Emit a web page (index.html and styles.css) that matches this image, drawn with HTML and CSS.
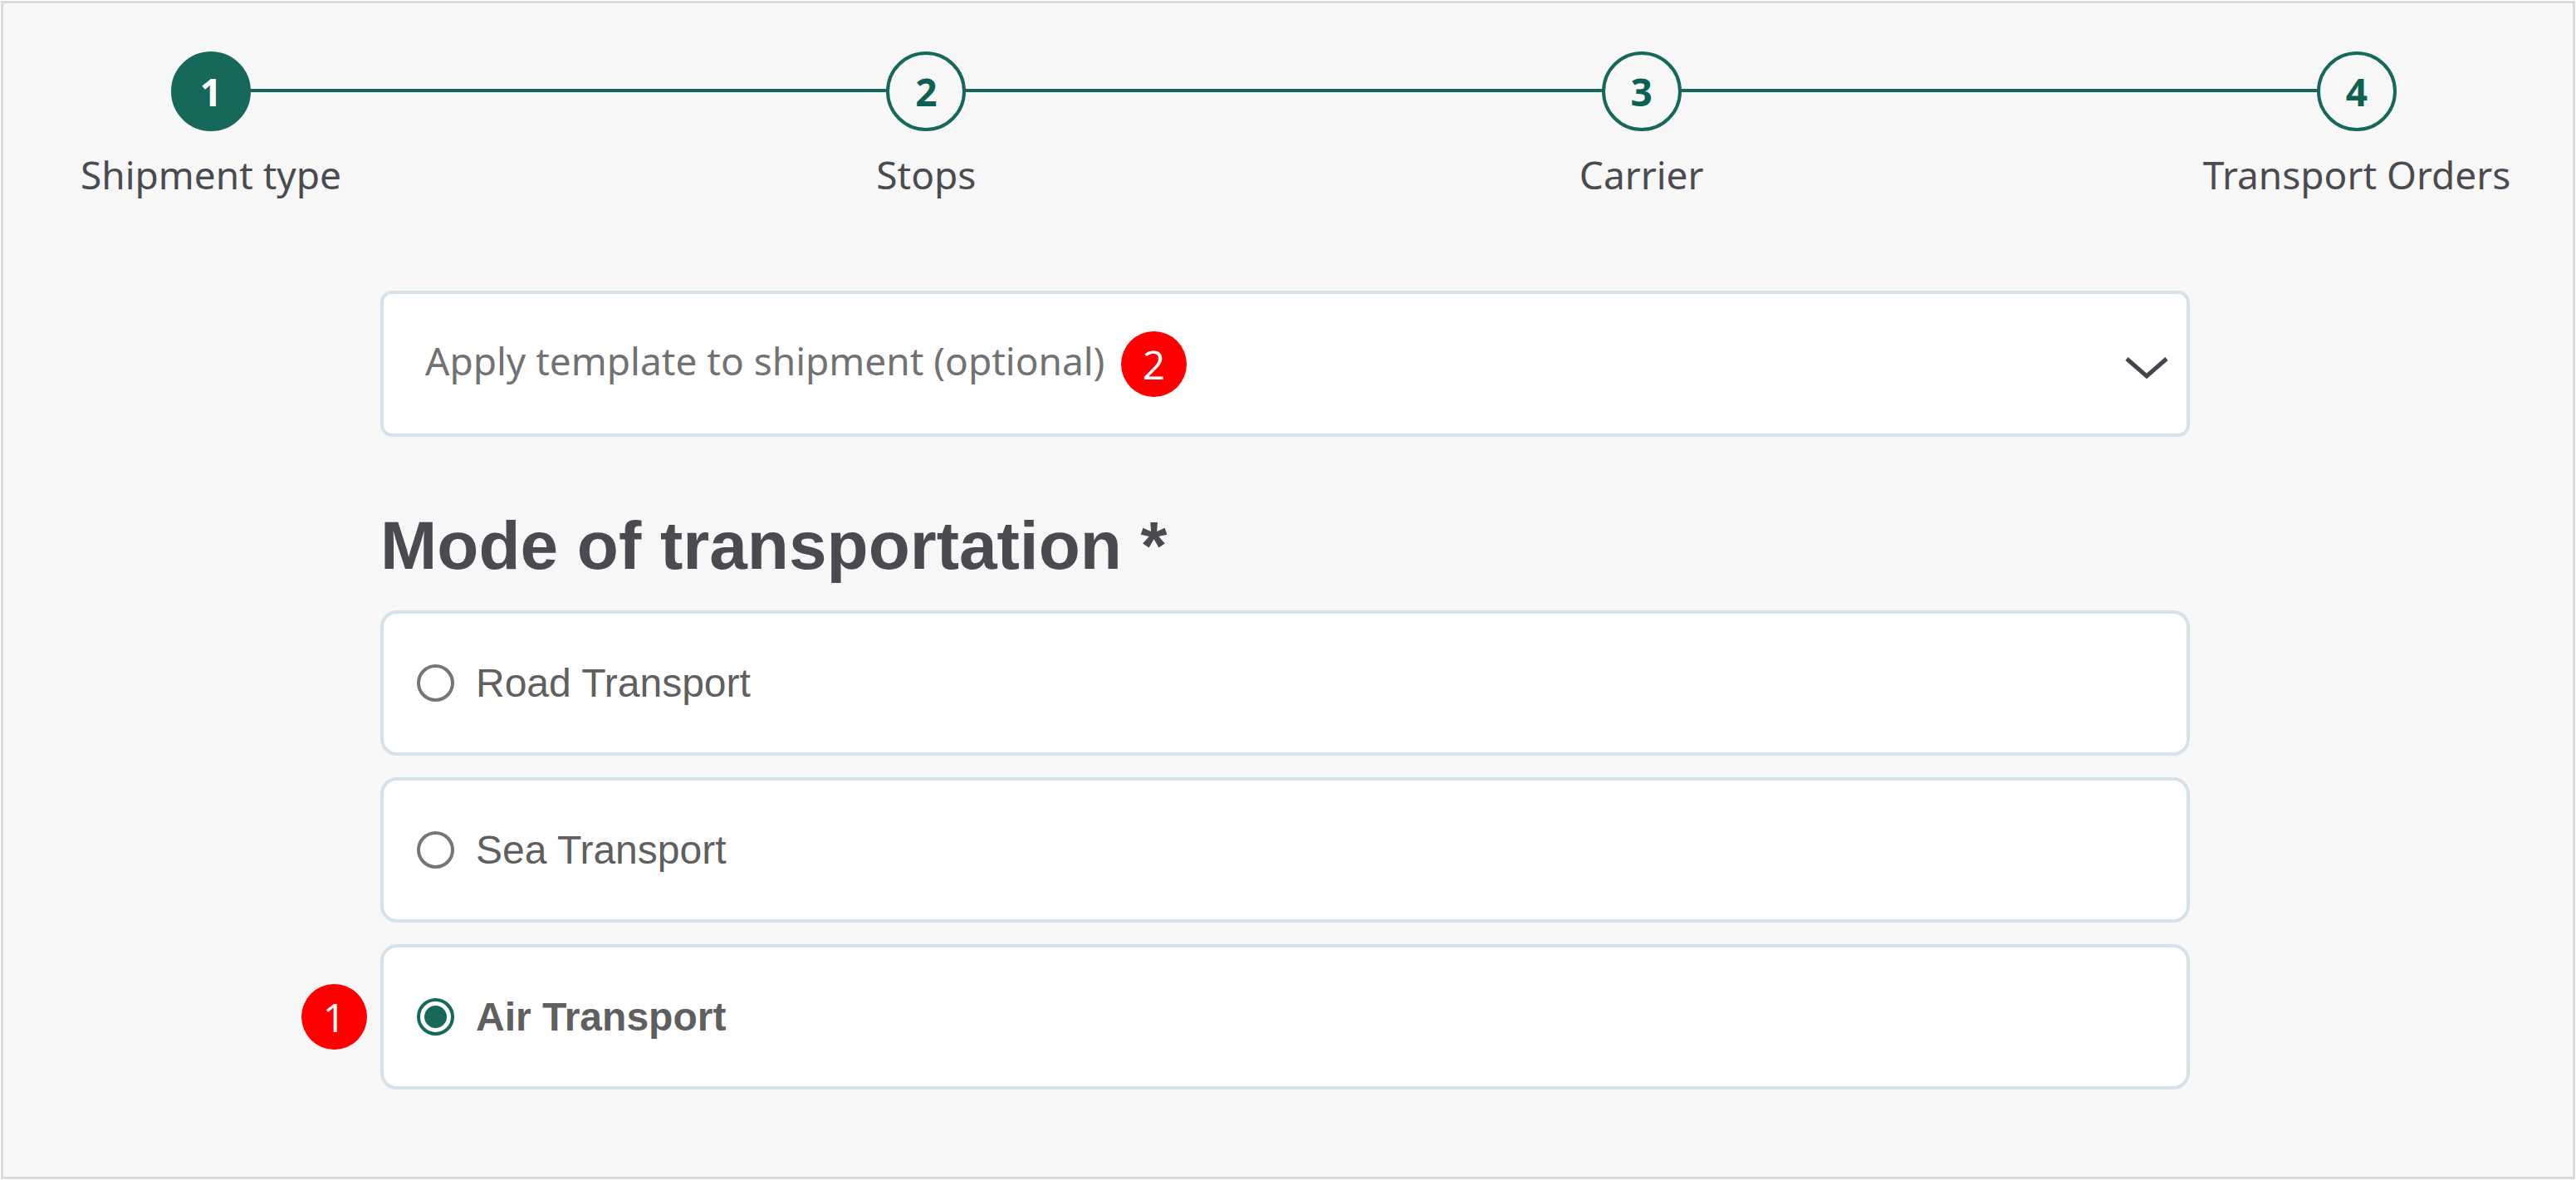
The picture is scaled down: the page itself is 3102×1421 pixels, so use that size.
FILE: index.html
```html
<!DOCTYPE html>
<html lang="en">
<head>
  <meta charset="UTF-8">
  <meta name="viewport" content="width=device-width, initial-scale=1.0">
  <title>Create shipment</title>
  <link rel="stylesheet" href="styles.css">
</head>
<body>
  <div class="page">
    <ol class="stepper">
      <li class="step active"><span class="circle">1</span><span class="step-label">Shipment type</span></li>
      <li class="step"><span class="circle">2</span><span class="step-label">Stops</span></li>
      <li class="step"><span class="circle">3</span><span class="step-label">Carrier</span></li>
      <li class="step"><span class="circle">4</span><span class="step-label">Transport Orders</span></li>
    </ol>

    <form class="form">
      <div class="template">
        <select class="template-select" aria-label="Apply template to shipment (optional)">
          <option>Apply template to shipment (optional)</option>
        </select>
        <svg class="chevron" viewBox="0 0 52 28" aria-hidden="true">
          <path d="M2 3 L26 24 L50 3" fill="none" stroke="#45464b" stroke-width="5"/>
        </svg>
        <span class="badge badge-template">2</span>
      </div>

      <fieldset class="modes">
        <legend class="title">Mode of transportation *</legend>
        <div class="options">
          <label class="option"><input type="radio" name="mode" value="road">Road Transport</label>
          <label class="option"><input type="radio" name="mode" value="sea">Sea Transport</label>
          <label class="option selected"><input type="radio" name="mode" value="air" checked>Air Transport<span class="badge badge-option">1</span></label>
        </div>
      </fieldset>
    </form>
  </div>
</body>
</html>
```

FILE: styles.css
```css
* {
  box-sizing: border-box;
}
body {
  margin: 1px;
  background: #fff;
  font-family: "Noto Sans", "Open Sans", sans-serif;
  font-size: 46px;
  line-height: 64px;
  color: #4a4b50;
}
.page {
  min-height: calc(100vh - 2px);
  padding-top: 58px;
  border: 3px solid #dadcdb;
  background: #f7f7f7;
}

/* stepper */
.stepper {
  position: relative;
  display: flex;
  justify-content: space-between;
  margin: 0;
  padding: 0 70px 0 60px;
  list-style: none;
}
.stepper::before {
  content: "";
  position: absolute;
  top: 45px;
  left: 250px;
  right: 260px;
  height: 4px;
  background: #16685a;
}
.step {
  position: relative;
  display: flex;
  flex-direction: column;
  align-items: center;
  gap: 20px;
  width: 380px;
  white-space: nowrap;
}
.circle {
  display: flex;
  align-items: center;
  justify-content: center;
  width: 96px;
  height: 96px;
  border: 4px solid #16685a;
  border-radius: 50%;
  background: #f7f7f7;
  color: #0d6152;
  font-family: "Open Sans", sans-serif;
  font-weight: 700;
}
.active .circle {
  background: #16685a;
  color: #fff;
}

/* form */
.form {
  margin: 108px 461px 0 454px;
}
.template {
  position: relative;
}
.template-select {
  display: block;
  width: 100%;
  height: 176px;
  padding: 0 120px 8px 50px;
  border: 4px solid #d6e2ea;
  border-radius: 14px;
  background: #fff;
  color: #727272;
  font: inherit;
  appearance: none;
}
.chevron {
  position: absolute;
  top: 79px;
  right: 26px;
  width: 52px;
  height: 28px;
  pointer-events: none;
}
.modes {
  min-width: 0;
  margin: 83px 0 0;
  padding: 0;
  border: 0;
}
.title {
  margin-bottom: 30px;
  padding: 0;
  font-family: "Liberation Sans", Arial, sans-serif;
  font-size: 82px;
  font-weight: 700;
  line-height: 96px;
}
.options {
  display: flex;
  flex-direction: column;
  gap: 26px;
}
.option {
  position: relative;
  display: flex;
  align-items: center;
  gap: 26px;
  height: 175px;
  padding: 0 40px;
  border: 4px solid #d6e2ea;
  border-radius: 20px;
  background: #fff;
  color: #5f5f5f;
  font-family: "Liberation Sans", Arial, sans-serif;
  font-size: 48px;
}
.option input {
  display: grid;
  place-content: center;
  width: 45px;
  height: 45px;
  margin: 0;
  border: 4px solid #767676;
  border-radius: 50%;
  background: #fff;
  appearance: none;
}
.option input:checked {
  border-color: #16685a;
}
.option input:checked::before {
  content: "";
  width: 27px;
  height: 27px;
  border-radius: 50%;
  background: #16685a;
}
.selected {
  font-weight: 700;
}

/* numbered callouts */
.badge {
  position: absolute;
  display: flex;
  align-items: center;
  justify-content: center;
  width: 79px;
  height: 79px;
  border-radius: 50%;
  background: #f00;
  color: #fff;
  font-family: "Open Sans", sans-serif;
  font-size: 48px;
  font-weight: 500;
}
.badge-template {
  top: 49px;
  left: 892px;
}
.badge-option {
  top: 44px;
  left: -99px;
}
```
